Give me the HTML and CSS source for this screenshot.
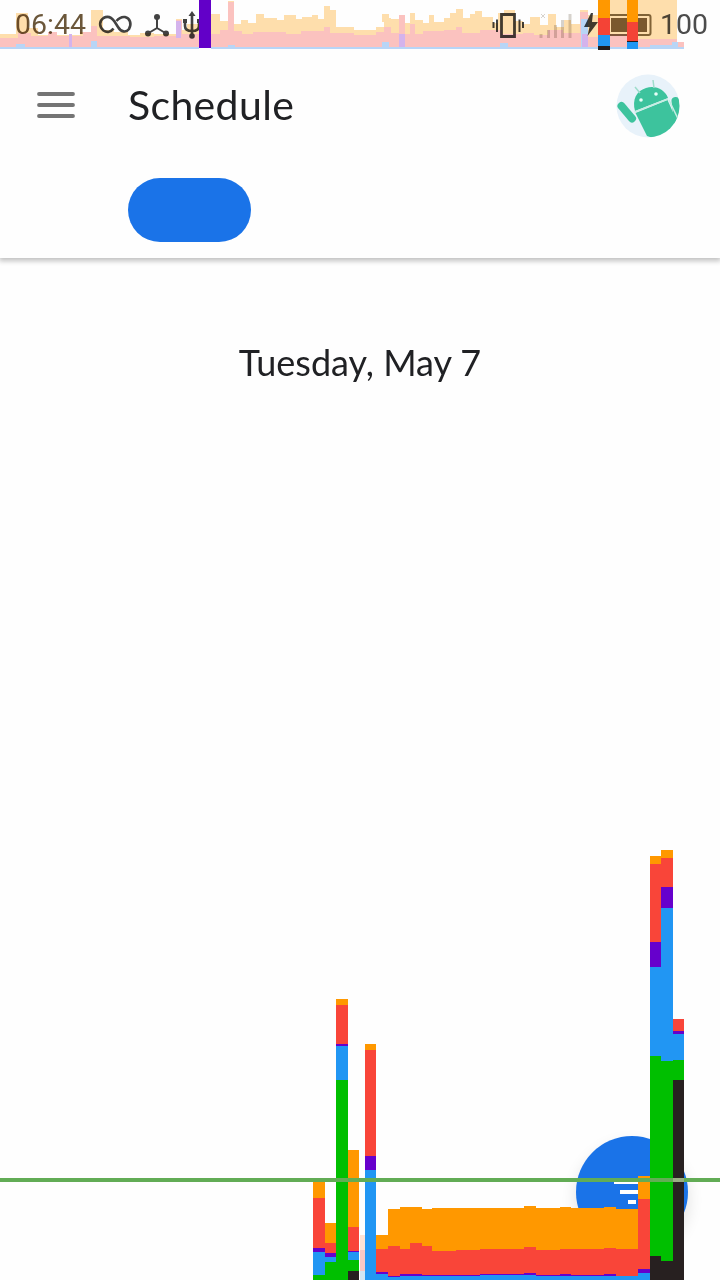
FILE: index.html
```html
<!DOCTYPE html>
<html lang="en">
<head>
<meta charset="utf-8">
<title>Schedule</title>
<link rel="stylesheet" href="styles.css">
</head>
<body>
<div class="screen">
  <div class="status">
    <span class="clock">06:44</span>
    <svg class="left-icons" width="106" height="50" viewBox="98 0 106 50" fill="none" stroke="#424242" stroke-width="2.6">
      <path d="M113.500 28.500C111 32 107 33 103.500 30.500C99 27 99 21 103.500 18C108 15.500 112 18 114.500 21.500L118 27C121 32 126 33 129 29C132 24 130 18 125 17C121 16.500 118.500 18.500 116.500 21"/>
      <path d="M157 17V28L147 34M157 28L167 34" stroke-width="2"/>
      <g fill="#424242" stroke="none"><circle cx="157" cy="17" r="3"/><circle cx="148" cy="33.500" r="3"/><circle cx="166" cy="33.500" r="3"/></g>
      <path d="M192 15V35M185 21V26Q185 31 192 31Q199 31 199 26V21"/>
      <path d="M188.500 16L192 11L195.500 16Z" fill="#424242" stroke="none"/>
      <circle cx="192" cy="36" r="2.800" fill="#424242" stroke="none"/>
      <path d="M183 21h4M197 21h4" stroke-width="4"/>
    </svg>
    <svg class="right-icons" width="162" height="50" viewBox="490 0 162 50" fill="none" stroke="#424242">
      <path d="M501.500 14.500H514.500V36.500H501.500Z" stroke-width="2.800"/>
      <path d="M497 19.500V32M519.500 19.500V32M493.500 22V28M523 22V28" stroke-width="2"/>
      <g stroke="#d6d2cc" stroke-width="3"><path d="M541 34V38M548.500 30V38M555.500 25V38M562.500 20V38M570 14V38"/><path d="M541 14L545 18M545 14L541 18" stroke-width="1"/></g>
      <path d="M591 13L584 27H589.500L587.500 36L598 22H592L593 13Z" fill="#424242" stroke="none"/>
      <rect x="608" y="15" width="42.500" height="20" rx="2" stroke="#80704f" stroke-width="2"/>
      <rect x="611" y="18" width="36" height="14" fill="#7a6544" stroke="none"/>
    </svg>
    <span class="level">100</span>
  </div>
  <header class="header">
    <div class="toolbar">
      <svg class="menu" width="38" height="26" viewBox="0 0 38 26" stroke="#747474" stroke-width="3.800" stroke-linecap="round"><path d="M2 2H36M2 13H36M2 24H36"/></svg>
      <h1 class="title">Schedule</h1>
      <svg class="avatar" width="64" height="64" viewBox="0 0 64 64">
        <defs><clipPath id="disc"><circle cx="32" cy="32" r="31.500"/></clipPath></defs>
        <circle cx="32" cy="32" r="31.500" fill="#e8f2fa"/>
        <g clip-path="url(#disc)" fill="#3dc39d">
          <path d="M19 37C16 26 20 17 30 14C40 11 49 16 52 24Z"/>
          <path d="M19.500 39L51.500 26L64 54L43 66L31 62Z"/>
          <path d="M5.500 32L16 44.500" stroke="#3dc39d" stroke-width="8" stroke-linecap="round"/>
          <path d="M59.500 27L62 47" stroke="#3dc39d" stroke-width="8" stroke-linecap="round"/>
          <path d="M24 19L19 13M38 14L37 6" stroke="#9eddcb" stroke-width="1.500"/>
          <path d="M18.500 38L52 25M53 26L64 49" fill="none" stroke="#c6ede2" stroke-width="1.500"/>
          <g fill="#e8fff8"><circle cx="25" cy="26" r="1.800"/><circle cx="40" cy="20" r="1.800"/></g>
        </g>
      </svg>
    </div>
    <div class="chip"></div>
  </header>
  <main class="content">
    <h2 class="date">Tuesday, May 7</h2>
  </main>
  <div class="fab">
    <svg width="112" height="112" viewBox="576 1136 112 112" fill="#fff"><path d="M614 1181H650V1184H614ZM620 1190H644V1194H620ZM628 1200H636V1204H628Z"/></svg>
  </div>
  <svg class="profile" width="720" height="1280" viewBox="0 0 720 1280" shape-rendering="crispEdges">
    <g class="faint">
      <path class="draw" d="M0 49V34H16V13H28V28H38V35H80V32H91V10H103V30H114V32H128V35H140V33H154V34H176V19H182V30H187V24H199V49ZM211 49V14H220V21H228V1H234V24H241V20H248V23H256V14H264V18H277V20H284V15H296V19H302V17H312V15H318V19H324V6H330V10H336V27H354V30H376V27H384V18H391V22H382V14H389V19H399V15H405V23H410V13H415V20H423V23H429V15H434V22H444V18H450V13H456V9H463V18H470V14H475V11H482V17H493V23H498V13H504V10H515V21H523V24H530V17H540V25H548V14H556V27H564V20H571V24H580V10H588V15H598V0H677V43H684V49Z"/>
      <path class="sync" d="M0 49V38H18V33H31V36H48V32H57V36H83V32H91V26H97V36H130V37H154V36H176V20H182V34H199V49ZM211 49V34H220V30H228V2H234V31H242V34H253V32H286V34H301V31H324V27H330V33H354V35H376V32H384V27H391V33H399V15H405V34H410V24H415V34H423V31H444V30H456V27H462V33H480V30H502V34H523V33H534V35H548V30H563V33H580V12H588V37H598V34H638V39H677V42H684V49Z"/>
      <path class="upload" d="M0 47H16V44H25V47H91V41H97V47H228V45H235V47H382V42H389V47H500V43H508V47H581V19H588V47H650V45H672V42H678V47H684V49H211V47H199V49H0Z"/>
      <path class="input" d="M69 34H72V47H69ZM176 21H181V38H176ZM399 34H405V47H399ZM582 34H588V47H582Z"/>
    </g>
    <path fill="#6200c8" d="M199 0H211V48H199Z"/>
    <path fill="#ff9800" d="M598 0H610V18H598ZM627 0H638V22H627Z"/>
    <path fill="#f44336" d="M598 18H610V35H598ZM627 22H638V41H627Z"/>
    <path fill="#2196f3" d="M598 35H610V46H598ZM627 42H638V49H627Z"/>
    <path fill="#241e1e" d="M598 46H610V50H598ZM627 41H638V42H627Z"/>

    <path fill="#ff9800" d="M313 1182H325V1198H313ZM325 1223H336V1244H325ZM336 999H348V1005H336ZM348 1150H359V1227H348ZM365 1044H376V1050H365ZM376 1235H388V1209H400V1207H422V1209H432V1208H524V1206H536V1208H560V1207H571V1208H604V1207H616V1209H638V1176H650V1199H638V1251H376ZM650 856H661V864H650ZM661 850H673V858H661Z"/>
    <path fill="#f94539" d="M313 1198H325V1248H313ZM325 1243H336V1253H325ZM336 1005H348V1044H336ZM348 1227H359V1251H348ZM365 1050H376V1156H365ZM376 1249H388V1246H400V1249H410V1243H422V1246H432V1251H456V1250H480V1249H524V1247H536V1250H560V1249H604V1248H616V1249H638V1199H650V1270H638V1277H376ZM650 864H661V942H650ZM661 858H673V887H661ZM673 1019H684V1031H673Z"/>
    <path fill="#6600cc" d="M313 1248H325V1252H313ZM325 1253H336V1257H325ZM336 1044H348V1046H336ZM348 1251H359V1252H348ZM365 1156H376V1170H365ZM376 1272H388V1276H400V1274H422V1275H480V1274H524V1273H536V1275H560V1274H571V1275H604V1274H616V1276H638V1269H650V1278H376ZM650 942H661V967H650ZM661 887H673V908H661ZM673 1031H684V1034H673Z"/>
    <path fill="#2196f3" d="M313 1252H325V1275H313ZM325 1257H336V1262H325ZM336 1046H348V1080H336ZM348 1252H359V1260H348ZM365 1170H376V1280H365ZM376 1274H388V1277H400V1276H480V1275H536V1276H638V1273H650V1280H376ZM650 967H661V1056H650ZM661 908H673V1061H661ZM673 1034H684V1060H673Z"/>
    <path fill="#00bf00" d="M313 1275H325V1262H336V1080H348V1260H359V1271H348V1280H313ZM650 1056H661V1061H673V1060H684V1080H673V1261H661V1256H650Z"/>
    <path fill="#272020" d="M348 1271H359V1280H348ZM650 1256H661V1261H673V1080H684V1280H650Z"/>
    <path fill="#ffe2d5" d="M360 1235H365V1250H360Z"/><path fill="#f9c8c5" d="M360 1250H365V1271H360Z"/><path fill="#d1e5f3" d="M360 1271H365V1280H360Z"/>
    <path fill="#62ac55" d="M0 1178H720V1182H0Z"/>
    <path fill="#98ad83" d="M673 1178H684V1182H673Z"/>
  </svg>
</div>
</body>
</html>
```
FILE: styles.css
```css
body { margin: 0; background: #fff; }
.screen {
  position: relative;
  display: flex;
  flex-direction: column;
  width: 720px;
  height: 1280px;
  overflow: hidden;
  background: #fefefe;
  color: #202124;
}
.status {
  display: flex;
  align-items: center;
  height: 50px;
  box-sizing: border-box;
  padding: 0 12px 0 15px;
  font: 28.5px/50px Roboto, sans-serif;
  color: #4c4c4c;
}
.clock { width: 83px; color: #6b573a; }
.right-icons { margin-left: 286px; }
.level { margin-left: auto; }
.header {
  height: 208px;
  box-sizing: border-box;
  padding: 24px 40px 0 37px;
  background: #fefefe;
  box-shadow: 0 2px 5px 1px #c0c0c0;
  clip-path: inset(0 0 -12px 0);
}
.toolbar { display: flex; height: 64px; }
.menu { margin-top: 18px; }
.title {
  margin: 0 0 0 53px;
  font: 400 41px/62px Lato, sans-serif;
  letter-spacing: 0.35px;
}
.avatar { margin-left: auto; }
.chip {
  width: 123px;
  height: 64px;
  margin: 40px 0 0 91px;
  border-radius: 32px;
  background: #1a73e8;
}
.content { flex: 1; padding-top: 72px; }
.date {
  margin: 0;
  text-align: center;
  font: 400 36px/64px Lato, sans-serif;
}
.fab {
  position: absolute;
  left: 576px;
  top: 1136px;
  width: 112px;
  height: 112px;
  border-radius: 50%;
  background: #1a73e8;
  box-shadow: 0 8px 16px rgba(0, 0, 0, 0.12);
}
.profile { position: absolute; inset: 0; }
.faint { mix-blend-mode: multiply; }
.draw { fill: #ffdfad; }
.sync { fill: #fcc3c0; }
.upload { fill: #b9d6f7; }
.input { fill: #d5b4ed; }
```
